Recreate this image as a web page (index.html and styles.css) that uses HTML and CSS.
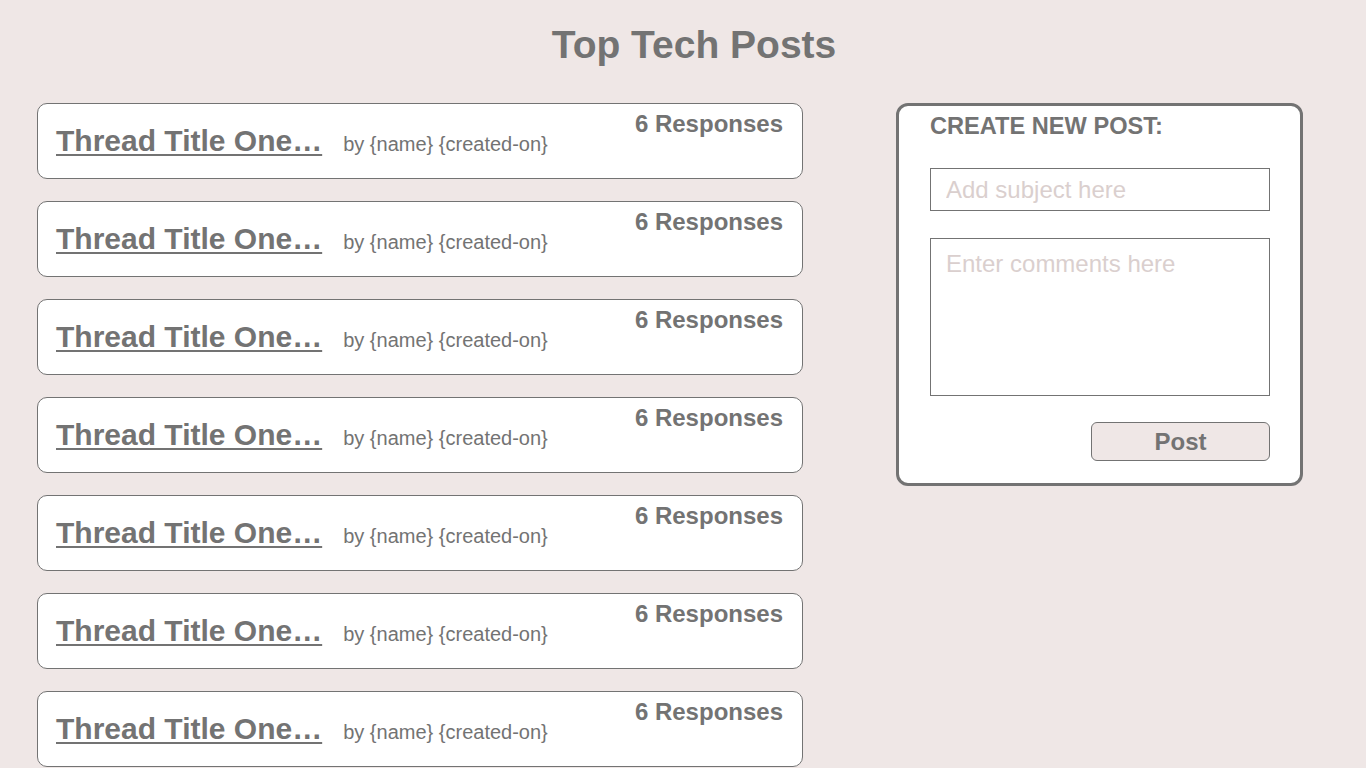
FILE: index.html
```html
<!DOCTYPE html>
<html lang="en">
<head>
<meta charset="utf-8">
<title>Top Tech Posts</title>
<link rel="stylesheet" href="styles.css">
</head>
<body>
<h1 class="page-title">Top Tech Posts</h1>
<main class="layout">
  <section class="thread-list">
    <article class="thread">
      <div class="thread-main"><a class="thread-title" href="#">Thread Title One…</a><span class="thread-meta">by {name} {created-on}</span></div>
      <span class="thread-count">6 Responses</span>
    </article>
    <article class="thread">
      <div class="thread-main"><a class="thread-title" href="#">Thread Title One…</a><span class="thread-meta">by {name} {created-on}</span></div>
      <span class="thread-count">6 Responses</span>
    </article>
    <article class="thread">
      <div class="thread-main"><a class="thread-title" href="#">Thread Title One…</a><span class="thread-meta">by {name} {created-on}</span></div>
      <span class="thread-count">6 Responses</span>
    </article>
    <article class="thread">
      <div class="thread-main"><a class="thread-title" href="#">Thread Title One…</a><span class="thread-meta">by {name} {created-on}</span></div>
      <span class="thread-count">6 Responses</span>
    </article>
    <article class="thread">
      <div class="thread-main"><a class="thread-title" href="#">Thread Title One…</a><span class="thread-meta">by {name} {created-on}</span></div>
      <span class="thread-count">6 Responses</span>
    </article>
    <article class="thread">
      <div class="thread-main"><a class="thread-title" href="#">Thread Title One…</a><span class="thread-meta">by {name} {created-on}</span></div>
      <span class="thread-count">6 Responses</span>
    </article>
    <article class="thread">
      <div class="thread-main"><a class="thread-title" href="#">Thread Title One…</a><span class="thread-meta">by {name} {created-on}</span></div>
      <span class="thread-count">6 Responses</span>
    </article>
  </section>
  <aside class="new-post">
    <h2 class="new-post-heading">CREATE NEW POST:</h2>
    <input class="field subject" type="text" placeholder="Add subject here">
    <textarea class="field comments" placeholder="Enter comments here"></textarea>
    <div class="actions"><button class="post-btn" type="button">Post</button></div>
  </aside>
</main>
</body>
</html>
```

FILE: styles.css
```css
* { box-sizing: border-box; }

html, body {
  margin: 0;
  padding: 0;
  background: #efe7e6;
  color: #737373;
  font-family: "Liberation Sans", Arial, Helvetica, sans-serif;
}

.page-title {
  margin: 0;
  padding: 22px 0 0 22px;
  height: 103px;
  font-size: 39px;
  line-height: 45px;
  font-weight: 700;
  text-align: center;
}

.layout {
  display: flex;
  align-items: flex-start;
  gap: 93px;
  padding-left: 37px;
}

.thread-list {
  width: 766px;
  display: flex;
  flex-direction: column;
  gap: 22px;
}

.thread {
  height: 76px;
  background: #fff;
  border: 1px solid #737373;
  border-radius: 10px;
  display: flex;
  align-items: center;
  justify-content: space-between;
  padding: 0 19px 0 18px;
}

.thread-main {
  display: flex;
  align-items: baseline;
  margin-top: 0;
}

.thread-title {
  color: #737373;
  font-size: 30px;
  line-height: 34px;
  font-weight: 700;
  text-decoration: underline;
  text-decoration-thickness: 2px;
  text-underline-offset: 3px;
}

.thread-meta {
  margin-left: 21px;
  font-size: 20px;
}

.thread-count {
  align-self: flex-start;
  margin-top: 6px;
  font-size: 24px;
  line-height: 28px;
  font-weight: 700;
}

.new-post {
  width: 407px;
  background: #fff;
  border: 3px solid #737373;
  border-radius: 12px;
  padding: 7px 30px 22px 31px;
  display: flex;
  flex-direction: column;
}

.new-post-heading {
  margin: 0 0 29px;
  font-size: 23.6px;
  line-height: 26px;
  font-weight: 700;
}

.field {
  display: block;
  width: 340px;
  border: 1px solid #737373;
  border-radius: 0;
  background: #fff;
  font-family: inherit;
  font-size: 24px;
  color: #737373;
  outline: none;
  margin: 0;
}

.field::placeholder { color: #dacfce; opacity: 1; }

.subject {
  height: 43px;
  padding: 1px 15px 0;
}

.comments {
  height: 158px;
  margin-top: 27px;
  padding: 11px 15px;
  line-height: 28px;
  resize: none;
}

.actions {
  display: flex;
  justify-content: flex-end;
  margin-top: 26px;
}

.post-btn {
  width: 179px;
  height: 39px;
  background: #efe7e6;
  border: 1px solid #737373;
  border-radius: 6px;
  color: #737373;
  font-family: inherit;
  font-size: 24px;
  font-weight: 700;
  padding: 1px 0 0;
}
```
